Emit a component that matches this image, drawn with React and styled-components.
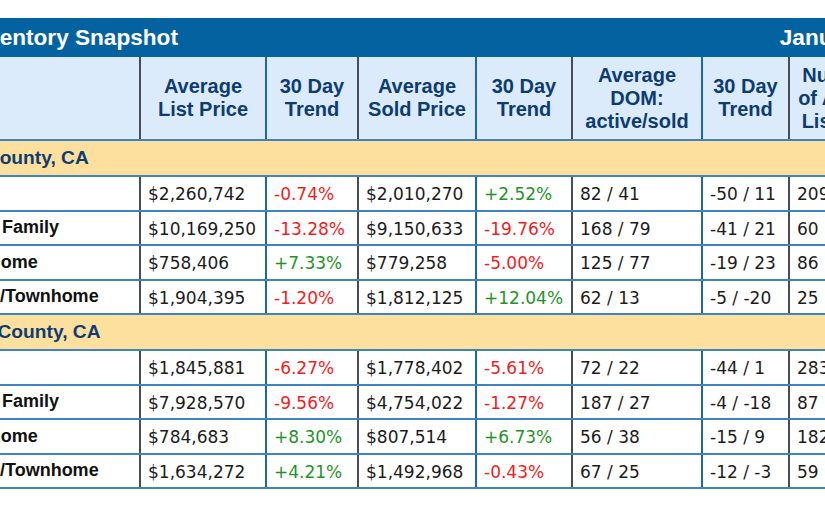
import React from 'react';
import styled, { createGlobalStyle } from 'styled-components';

const GlobalStyle = createGlobalStyle`
  html, body {
    margin: 0;
    padding: 0;
    background: #fff;
  }
  body {
    font-family: "Liberation Sans", Arial, sans-serif;
  }
`;

const Viewport = styled.div`
  width: 825px;
  height: 510px;
  overflow: hidden;
  padding-top: 18px;
  box-sizing: border-box;
`;

const Sheet = styled.div`
  width: 1050px;
  margin-left: -63px;
`;

const TitleBar = styled.div`
  display: flex;
  align-items: center;
  justify-content: space-between;
  height: 39px;
  padding: 0 64px 0 30px;
  background: #0462a1;
  color: #fff;
  font: bold 22.6px "Liberation Sans", Arial, sans-serif;
`;

const Table = styled.table`
  border-collapse: collapse;
  table-layout: fixed;
  width: 1050px;
  font-family: "DejaVu Sans", Verdana, sans-serif;
  font-size: 17px;
  color: #1c1c1c;
`;

const HeadCell = styled.th`
  height: 82px;
  padding: 0 4px;
  background: #dcebfb;
  color: #0d3c70;
  font: bold 20px/23px "Liberation Sans", Arial, sans-serif;
  text-align: center;
  vertical-align: middle;
  border-bottom: 2px solid #3f83c0;
  border-left: ${p => (p.$first ? 'none' : `2px solid ${p.$dark ? '#474c57' : '#1f66a6'}`)};
`;

const CountyCell = styled.td`
  height: 34px;
  padding: 0 6px 0 4px;
  background: #fde09d;
  color: #0e3d73;
  font: bold 19.2px "Liberation Sans", Arial, sans-serif;
  white-space: nowrap;
  border-bottom: 2px solid #3f83c0;
`;

const Row = styled.tr`
  height: 34.5px;
`;

const LabelCell = styled.td`
  padding: 0 6px;
  font: bold 18px "Liberation Sans", Arial, sans-serif;
  color: #111;
  white-space: nowrap;
  border-bottom: 2px solid #3f83c0;
`;

const Cell = styled.td`
  padding: 2px 7px 0;
  white-space: nowrap;
  color: ${p => (p.$tone === 'down' ? '#f41c1c' : p.$tone === 'up' ? '#1f9426' : '#1c1c1c')};
  border-bottom: 2px solid #3f83c0;
  border-left: 2px solid ${p => (p.$dark ? '#474c57' : '#1f66a6')};
`;

const columns = [
  { label: ['Average', 'List Price'], width: 126, dark: true },
  { label: ['30 Day', 'Trend'], width: 92, colored: true },
  { label: ['Average', 'Sold Price'], width: 118, dark: true },
  { label: ['30 Day', 'Trend'], width: 96, colored: true },
  { label: ['Average', 'DOM:', 'active/sold'], width: 130, dark: true },
  { label: ['30 Day', 'Trend'], width: 87 },
  { label: ['Number', 'of Active', 'Listings'], width: 102, dark: true },
  { label: ['30 Day', 'Trend'], width: 96, colored: true },
];

const tone = v => (v.startsWith('-') ? 'down' : 'up');

const counties = [
  {
    name: 'Inyo County, CA',
    rows: [
      ['All', '$2,260,742', '-0.74%', '$2,010,270', '+2.52%', '82 / 41', '-50 / 11', '209', '+4.50%'],
      ['Single Family', '$10,169,250', '-13.28%', '$9,150,633', '-19.76%', '168 / 79', '-41 / 21', '60', '-3.23%'],
      ['Twin Home', '$758,406', '+7.33%', '$779,258', '-5.00%', '125 / 77', '-19 / 23', '86', '+2.38%'],
      ['Condo/Townhome', '$1,904,395', '-1.20%', '$1,812,125', '+12.04%', '62 / 13', '-5 / -20', '25', '+8.70%'],
    ],
  },
  {
    name: 'Marin County, CA',
    rows: [
      ['All', '$1,845,881', '-6.27%', '$1,778,402', '-5.61%', '72 / 22', '-44 / 1', '283', '-1.05%'],
      ['Single Family', '$7,928,570', '-9.56%', '$4,754,022', '-1.27%', '187 / 27', '-4 / -18', '87', '+1.16%'],
      ['Twin Home', '$784,683', '+8.30%', '$807,514', '+6.73%', '56 / 38', '-15 / 9', '182', '-2.15%'],
      ['Condo/Townhome', '$1,634,272', '+4.21%', '$1,492,968', '-0.43%', '67 / 25', '-12 / -3', '59', '+3.51%'],
    ],
  },
];

const App = () => (
  <>
    <GlobalStyle />
    <Viewport>
      <Sheet>
        <TitleBar>
          <span>Inventory Snapshot</span>
          <span>January 2020</span>
        </TitleBar>
        <Table>
          <colgroup>
            <col style={{ width: 203 }} />
            {columns.map((c, i) => (
              <col key={i} style={{ width: c.width }} />
            ))}
          </colgroup>
          <thead>
            <tr>
              <HeadCell $first />
              {columns.map((c, i) => (
                <HeadCell key={i} $dark={c.dark}>
                  {c.label.map((line, j) => (
                    <div key={j}>{line}</div>
                  ))}
                </HeadCell>
              ))}
            </tr>
          </thead>
          {counties.map(county => (
            <tbody key={county.name}>
              <tr>
                <CountyCell colSpan={columns.length + 1}>{county.name}</CountyCell>
              </tr>
              {county.rows.map(row => (
                <Row key={row[0]}>
                  <LabelCell>{row[0]}</LabelCell>
                  {row.slice(1).map((v, i) => (
                    <Cell key={i} $dark={columns[i].dark} $tone={columns[i].colored ? tone(v) : undefined}>
                      {v}
                    </Cell>
                  ))}
                </Row>
              ))}
            </tbody>
          ))}
        </Table>
      </Sheet>
    </Viewport>
  </>
);

export default App;
